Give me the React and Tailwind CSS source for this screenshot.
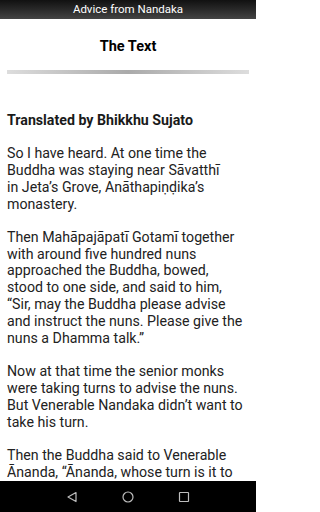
import React from "react";

// line breaks follow the screenshot
const paragraphs = [
  [
    "So I have heard. At one time the",
    "Buddha was staying near Sāvatthī",
    "in Jeta’s Grove, Anāthapiṇḍika’s",
    "monastery.",
  ],
  [
    "Then Mahāpajāpatī Gotamī together",
    "with around five hundred nuns",
    "approached the Buddha, bowed,",
    "stood to one side, and said to him,",
    "“Sir, may the Buddha please advise",
    "and instruct the nuns. Please give the",
    "nuns a Dhamma talk.”",
  ],
  [
    "Now at that time the senior monks",
    "were taking turns to advise the nuns.",
    "But Venerable Nandaka didn’t want to",
    "take his turn.",
  ],
  [
    "Then the Buddha said to Venerable",
    "Ānanda, “Ānanda, whose turn is it to",
    "advise the nuns today?”",
  ],
];

const App = () => {
  return (
    <div className="w-[256px] h-[512px] flex flex-col bg-white overflow-hidden font-['Roboto',sans-serif]">
      <div className="h-[19px] shrink-0 flex items-center justify-center bg-gradient-to-b from-[#111] to-[#444]">
        <span className="text-white text-[11.5px] leading-none">Advice from Nandaka</span>
      </div>

      <div className="flex-1 overflow-hidden px-[7px]">
        <h1 className="text-center font-bold text-[14.5px] text-black mt-[19px] leading-[18px]">
          The Text
        </h1>
        <div className="mt-[14px] h-[4px] bg-gradient-to-r from-[#dddddd] via-[#aaaaaa] to-[#dddddd]" />

        <p className="mt-[38px] font-bold text-[14.2px] text-[#1a1a1a] leading-[17px]">
          Translated by Bhikkhu Sujato
        </p>

        {paragraphs.map((lines, index) => (
          <p key={index} className="mt-[16px] text-[14.2px] text-[#222] leading-[16.9px] whitespace-nowrap">
            {lines.map((line, i) => (
              <React.Fragment key={i}>
                {line}
                {i < lines.length - 1 && <br />}
              </React.Fragment>
            ))}
          </p>
        ))}
      </div>

      <div className="h-[31px] shrink-0 bg-black flex items-center justify-center gap-[44px]">
        <svg width="12" height="12" viewBox="0 0 12 12" fill="none" stroke="#bdbdbd" strokeWidth="1.2">
          <path d="M10 1.5 L2 6 L10 10.5 Z" strokeLinejoin="round" />
        </svg>
        <svg width="12" height="12" viewBox="0 0 12 12" fill="none" stroke="#bdbdbd" strokeWidth="1.2">
          <circle cx="6" cy="6" r="5" />
        </svg>
        <svg width="12" height="12" viewBox="0 0 12 12" fill="none" stroke="#bdbdbd" strokeWidth="1.2">
          <rect x="1.5" y="1.5" width="9" height="9" rx="0.5" />
        </svg>
      </div>
    </div>
  );
};

export default App;
